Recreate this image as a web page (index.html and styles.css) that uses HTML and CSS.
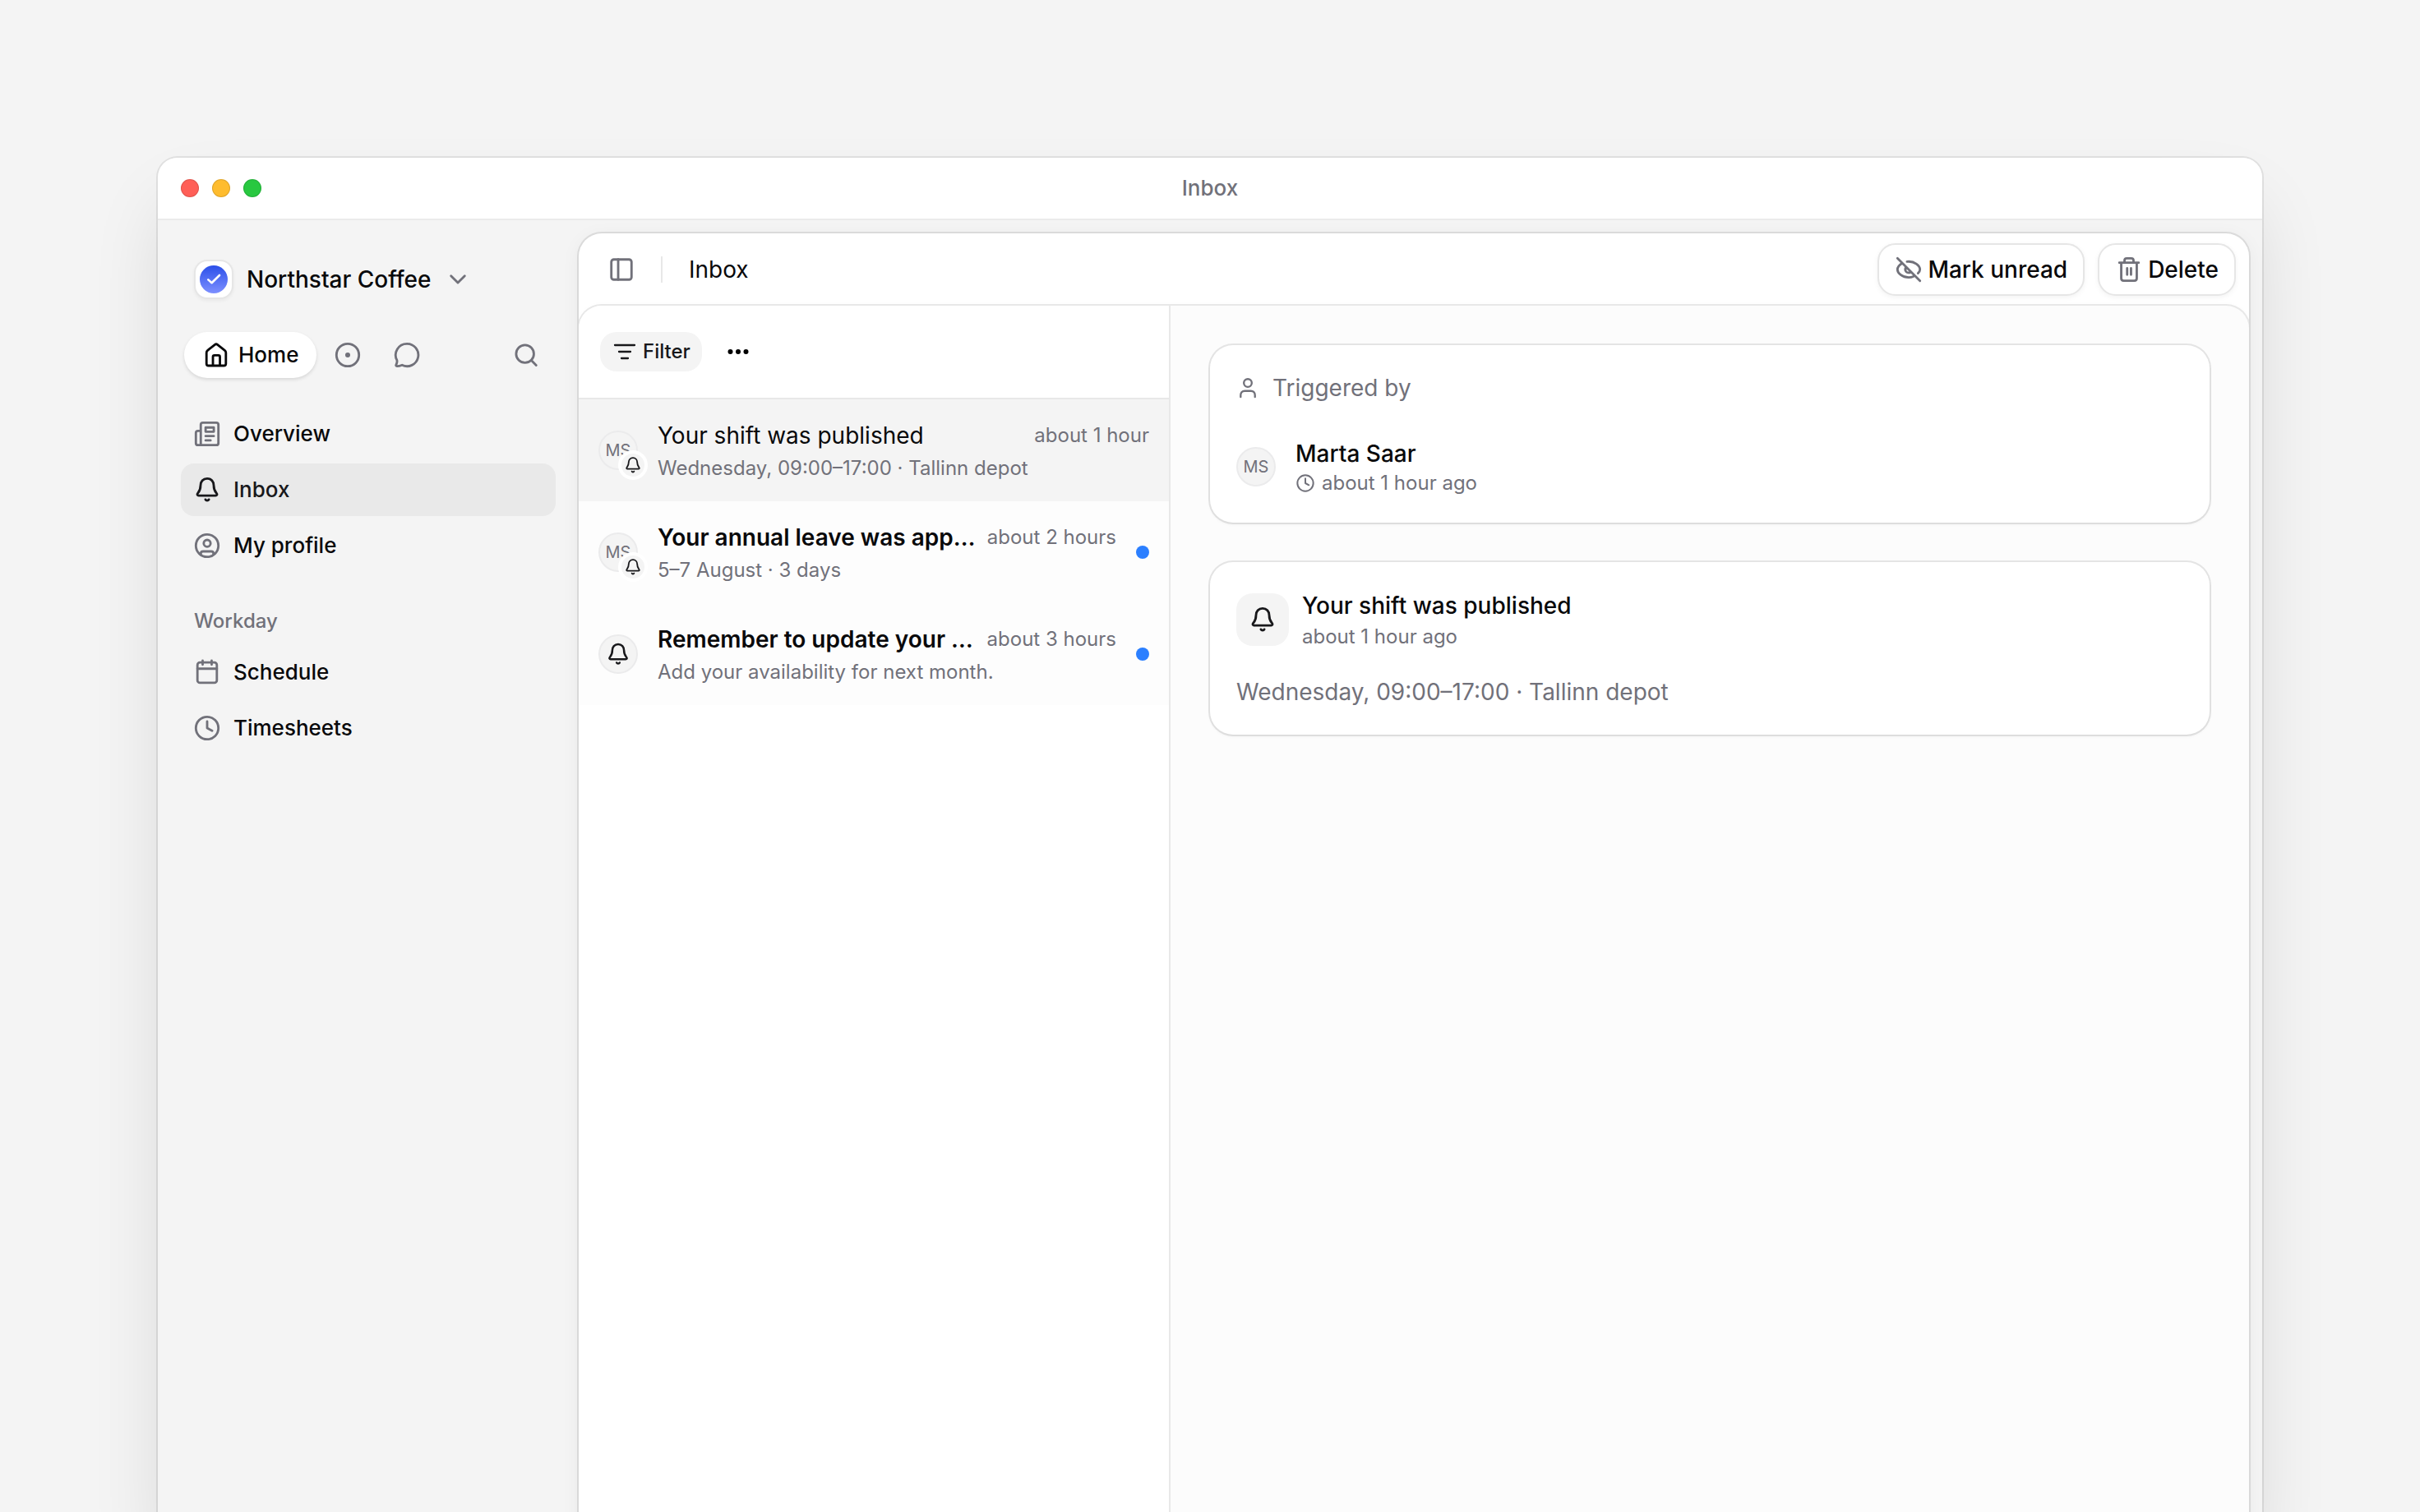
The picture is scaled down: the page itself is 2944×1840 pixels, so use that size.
FILE: index.html
```html
<!DOCTYPE html>
<html lang="en">
<head>
<meta charset="utf-8">
<title>Inbox</title>
<link rel="stylesheet" href="styles.css">
</head>
<body>
<svg class="sprite" aria-hidden="true">
  <symbol id="bell" viewBox="0 0 18 18">
    <path d="M9 1.75C6.4 1.75 4.75 3.8 4.75 6.2 4.75 9.2 4 10 3 11.2 2.3 12.1 2.8 12.75 3.5 12.75H14.5C15.2 12.75 15.7 12.1 15 11.2 14 10 13.25 9.2 13.25 6.2 13.25 3.8 11.6 1.75 9 1.75Z"/>
    <path d="M7.9 15.3a1.2 1.1 0 0 0 2.2 0"/>
  </symbol>
  <symbol id="clock" viewBox="0 0 18 18">
    <circle cx="9" cy="9" r="7.25"/>
    <path d="M9 4.75V9L12.2 10.7"/>
  </symbol>
</svg>
<div class="window">
  <header class="titlebar">
    <div class="lights"><span class="light red"></span><span class="light amber"></span><span class="light green"></span></div>
    <span class="window-title">Inbox</span>
  </header>
  <div class="app">
    <aside class="sidebar">
      <button class="workspace" type="button">
        <span class="logo"><svg viewBox="0 0 34 34" width="34" height="34">
          <defs><linearGradient id="brand" x1="0" y1="0" x2="0" y2="1"><stop offset="0" stop-color="#2b4fe9"/><stop offset="1" stop-color="#7d90ff"/></linearGradient></defs>
          <circle cx="17" cy="17" r="17" fill="url(#brand)"/>
          <path d="M10.3 17.4 14.6 21.2 24 12" fill="none" stroke="#fff" stroke-width="2.6" stroke-linecap="round" stroke-linejoin="round"/>
        </svg></span>
        <span>Northstar Coffee</span>
        <svg class="icon chevron" viewBox="0 0 18 18"><path d="M4.6 6.7 9 11.1 13.4 6.7"/></svg>
      </button>
      <div class="tabs">
        <button class="tab tab-active" type="button">
          <svg class="icon" viewBox="0 0 18 18"><path d="M2.75 7.5C2.75 6.8 3 6.4 3.5 6L8.2 2.3C8.7 1.9 9.3 1.9 9.8 2.3L14.5 6C15 6.4 15.25 6.8 15.25 7.5V14.5C15.25 15.4 14.7 15.9 13.9 15.9H4.1C3.3 15.9 2.75 15.4 2.75 14.5Z"/><path d="M6.9 15.7V10.2C6.9 9.6 7.3 9.2 7.9 9.2H10.4C11 9.2 11.4 9.6 11.4 10.2V15.7"/></svg>
          Home
        </button>
        <button class="tab" type="button" aria-label="Focus">
          <svg class="icon" viewBox="0 0 18 18"><circle cx="9" cy="9" r="7.25"/><circle class="solid" cx="9" cy="9" r="1.6"/></svg>
        </button>
        <button class="tab" type="button" aria-label="Chat">
          <svg class="icon" viewBox="0 0 18 18"><path d="M9 1.75A7.25 7.25 0 1 1 5.9 15.5C4.9 15.9 3.8 16.3 2.6 16.25 2 16.2 1.8 15.7 2.1 15.2 2.6 14.3 2.8 13.4 2.6 12.4A7.25 7.25 0 0 1 9 1.75Z"/></svg>
        </button>
        <button class="tab tab-search" type="button" aria-label="Search">
          <svg class="icon" viewBox="0 0 18 18"><circle cx="8.3" cy="8.3" r="5.7"/><path d="M12.4 12.5 15.5 15.6"/></svg>
        </button>
      </div>
      <nav class="nav">
        <a class="nav-item" href="#overview"><svg class="icon" viewBox="0 0 18 18"><path d="M4.9 16.25V3.1C4.9 2.3 5.4 1.75 6.2 1.75H14.9C15.7 1.75 16.25 2.3 16.25 3.1V14.9C16.25 15.7 15.7 16.25 14.9 16.25H3.1C2.3 16.25 1.75 15.7 1.75 14.9V8.4C1.75 7.6 2.3 7.1 3.1 7.1H4.6"/><path d="M8 4.9H13.3V7.6H8ZM8 10.4H13.3M8 13.2H11.2"/></svg>Overview</a>
        <a class="nav-item nav-current" href="#inbox" aria-current="page"><svg class="icon"><use href="#bell"/></svg>Inbox</a>
        <a class="nav-item" href="#profile"><svg class="icon" viewBox="0 0 18 18"><circle cx="9" cy="9" r="7.25"/><circle cx="9" cy="7.5" r="2.2"/><path d="M4.9 14.8V14.2C4.9 13.3 5.5 12.7 6.4 12.7H11.6C12.5 12.7 13.1 13.3 13.1 14.2V14.8"/></svg>My profile</a>
      </nav>
      <h2 class="nav-heading">Workday</h2>
      <nav class="nav">
        <a class="nav-item" href="#schedule"><svg class="icon" viewBox="0 0 18 18"><rect x="2.75" y="2.75" width="12.5" height="13.1" rx="1.6"/><path d="M2.75 6.75H15.25M6.1 1.6V4.1M11.9 1.6V4.1"/></svg>Schedule</a>
        <a class="nav-item" href="#timesheets"><svg class="icon"><use href="#clock"/></svg>Timesheets</a>
      </nav>
    </aside>
    <main class="panel">
      <header class="panel-head">
        <button class="toggle" type="button" aria-label="Toggle sidebar"><svg class="icon" viewBox="0 0 18 18"><rect x="2.5" y="2.5" width="13" height="13" rx="1.6"/><path d="M6.9 2.5V15.5"/></svg></button>
        <span class="divider"></span>
        <h1 class="panel-title">Inbox</h1>
        <div class="actions">
          <button class="action" type="button"><svg class="icon" viewBox="0 0 18 18"><path d="M1.75 1.75 16.25 16.25M4.6 5C2.9 6.1 1.75 7.7 1.75 9 1.75 11.2 4.8 14.1 9 14.1 10.1 14.1 11.1 13.9 12 13.5M7.9 3.9C12.8 3.3 16.25 6.6 16.25 9 16.25 9.8 15.8 10.6 15 11.4M7 7.9C6.2 9.8 7.7 11.6 9.9 10.9"/></svg>Mark unread</button>
          <button class="action" type="button"><svg class="icon" viewBox="0 0 18 18"><path d="M2.75 4.6H15.25M6.1 4.4V3.2C6.1 2.4 6.7 1.8 7.5 1.8H10.5C11.3 1.8 11.9 2.4 11.9 3.2V4.4M4 4.8V14.6C4 15.6 4.6 16.2 5.5 16.2H12.5C13.4 16.2 14 15.6 14 14.6V4.8M7.8 8.2V12.3M10.3 8.2V12.3"/></svg>Delete</button>
        </div>
      </header>
      <div class="content">
        <section class="list">
          <div class="list-head">
            <button class="filter" type="button"><svg class="filter-icon" viewBox="0 0 32 32"><path d="M4 8H28M9 16H23M12 24H20"/></svg>Filter</button>
            <button class="more" type="button" aria-label="More"><svg viewBox="0 0 32 32" width="32" height="32"><circle cx="6.5" cy="16" r="3"/><circle cx="16" cy="16" r="3"/><circle cx="25.5" cy="16" r="3"/></svg></button>
          </div>
          <ul class="rows">
            <li><a class="row row-current" href="#shift">
              <span class="avatar">MS<span class="badge"><svg class="icon icon-xs"><use href="#bell"/></svg></span></span>
              <span class="row-main"><span class="row-top"><span class="row-title">Your shift was published</span><time class="meta">about 1 hour</time></span><span class="meta">Wednesday, 09:00–17:00 · Tallinn depot</span></span>
            </a></li>
            <li><a class="row row-unread" href="#leave">
              <span class="avatar">MS<span class="badge"><svg class="icon icon-xs"><use href="#bell"/></svg></span></span>
              <span class="row-main"><span class="row-top"><span class="row-title">Your annual leave was approved</span><time class="meta">about 2 hours</time></span><span class="meta">5–7 August · 3 days</span></span>
              <span class="dot"></span>
            </a></li>
            <li><a class="row row-unread" href="#availability">
              <span class="avatar"><svg class="icon icon-md"><use href="#bell"/></svg></span>
              <span class="row-main"><span class="row-top"><span class="row-title">Remember to update your availability</span><time class="meta">about 3 hours</time></span><span class="meta">Add your availability for next month.</span></span>
              <span class="dot"></span>
            </a></li>
          </ul>
        </section>
        <section class="detail">
          <article class="card">
            <h2 class="card-label"><svg class="icon icon-sm" viewBox="0 0 18 18"><circle cx="9" cy="5.2" r="3.1"/><path d="M3.4 16.2V14.6C3.4 12.7 4.7 11.4 6.6 11.4H11.4C13.3 11.4 14.6 12.7 14.6 14.6V16.2"/></svg>Triggered by</h2>
            <div class="person">
              <span class="avatar">MS</span>
              <div class="stack"><strong class="name">Marta Saar</strong><span class="meta stamp"><svg class="icon icon-clock"><use href="#clock"/></svg>about 1 hour ago</span></div>
            </div>
          </article>
          <article class="card">
            <div class="event">
              <span class="tile"><svg class="icon"><use href="#bell"/></svg></span>
              <div class="stack"><strong class="name name-event">Your shift was published</strong><span class="meta stamp">about 1 hour ago</span></div>
            </div>
            <p class="card-text">Wednesday, 09:00–17:00 · Tallinn depot</p>
          </article>
        </section>
      </div>
    </main>
  </div>
</div>
</body>
</html>
```
FILE: styles.css
```css
:root {
  --ink: #09090b;
  --muted: #71717a;
  --grey: #f4f4f4;
  --line: #e8e8e8;
  --ring: rgba(0, 0, 0, .09);
}
* { box-sizing: border-box; }
body {
  margin: 0;
  height: 100vh;
  overflow: hidden;
  padding: 192px 192px 0;
  background: var(--grey);
  color: var(--ink);
  font-family: Inter, sans-serif;
  font-size: 26px;
  font-weight: 500;
  line-height: 40px;
}
h1, h2, p, ul { margin: 0; padding: 0; font: inherit; }
ul { list-style: none; }
a { color: inherit; text-decoration: none; }
button { border: 0; padding: 0; background: none; color: inherit; font: inherit; }
svg { display: block; flex: none; }
.sprite { position: absolute; width: 0; height: 0; }

.icon {
  width: 34px;
  height: 34px;
  fill: none;
  stroke: var(--muted);
  stroke-width: 1.5;
  stroke-linecap: round;
  stroke-linejoin: round;
}
.icon .solid { fill: var(--muted); stroke: none; }
.icon-xs { width: 22px; height: 22px; }
.icon-sm { width: 28px; height: 28px; }
.icon-md { width: 30px; height: 30px; }
.icon-clock { width: 24px; height: 24px; }

.window {
  display: flex;
  flex-direction: column;
  height: calc(100vh - 160px);
  border-radius: 24px;
  overflow: hidden;
  background: var(--grey);
  box-shadow: 0 0 0 2px rgba(0, 0, 0, .08), 0 48px 96px -16px rgba(0, 0, 0, .14);
}
.titlebar {
  flex: none;
  display: grid;
  grid-template-columns: 1fr auto 1fr;
  align-items: center;
  height: 76px;
  padding: 0 28px;
  background: #fff;
  border-bottom: 2px solid #ebebeb;
  color: var(--muted);
}
.lights { display: flex; gap: 16px; }
.light {
  width: 22px;
  height: 22px;
  border-radius: 50%;
  box-shadow: inset 0 0 0 1px rgba(0, 0, 0, .12);
}
.red { background: #ff5f57; }
.amber { background: #febc2e; }
.green { background: #28c840; }

.app { flex: 1; display: flex; min-height: 0; padding: 16px 16px 0 0; }
.sidebar { flex: none; width: 512px; padding: 32px 28px; }
.workspace {
  display: flex;
  align-items: center;
  gap: 16px;
  margin-left: 16px;
  font-size: 28px;
}
.logo {
  display: grid;
  place-items: center;
  width: 48px;
  height: 48px;
  border: 2px solid #e6e6e6;
  border-radius: 16px;
  background: #fff;
  box-shadow: 0 2px 4px rgba(0, 0, 0, .05);
}
.tabs { display: flex; gap: 4px; margin: 40px 4px 36px; }
.tab {
  display: flex;
  align-items: center;
  justify-content: center;
  gap: 10px;
  width: 68px;
  height: 56px;
  border-radius: 28px;
}
.tab-active {
  width: auto;
  padding: 0 22px;
  background: #fff;
  box-shadow: 0 2px 4px rgba(0, 0, 0, .12);
}
.tab-active .icon { stroke: var(--ink); }
.tab-search { width: 64px; margin-left: auto; }
.nav { display: grid; gap: 4px; }
.nav-item {
  display: flex;
  align-items: center;
  gap: 15px;
  height: 64px;
  padding: 0 15px;
  border-radius: 16px;
}
.nav-current { background: #e9e9e9; color: #18181b; }
.nav-current .icon { stroke: #18181b; }
.nav-heading {
  margin: 44px 16px 14px;
  color: var(--muted);
  font-size: 24px;
  line-height: 32px;
}

.panel {
  flex: 1;
  min-width: 0;
  display: flex;
  flex-direction: column;
  overflow: hidden;
  border-radius: 28px 28px 0 0;
  background: #fff;
  box-shadow: 0 0 0 2px var(--ring), 0 4px 24px rgba(0, 0, 0, .05);
}
.panel-head {
  flex: none;
  display: flex;
  align-items: center;
  height: 88px;
  padding: 0 16px 0 35px;
  font-size: 28px;
}
.divider { width: 2px; height: 32px; margin: 0 32px 0 31px; background: var(--line); }
.panel-title { font-weight: 400; }
.actions { display: flex; gap: 16px; margin-left: auto; }
.action {
  display: flex;
  align-items: center;
  gap: 6px;
  height: 64px;
  padding: 0 19px;
  border: 2px solid #e6e6e6;
  border-radius: 22px;
  background: #fff;
  box-shadow: 0 2px 6px rgba(0, 0, 0, .05);
}
.toggle { display: block; }

.content {
  flex: 1;
  display: flex;
  min-height: 0;
  overflow: hidden;
  border-radius: 28px 28px 0 0;
  background: #fcfcfc;
  box-shadow: 0 0 0 2px var(--line), 0 0 12px rgba(0, 0, 0, .02);
}
.list {
  flex: none;
  width: 720px;
  background: #fff;
  border-right: 2px solid var(--line);
}
.list-head {
  display: flex;
  align-items: center;
  gap: 20px;
  height: 114px;
  padding: 0 26px;
  border-bottom: 2px solid var(--line);
  color: #18181b;
  font-size: 24px;
}
.filter {
  display: flex;
  align-items: center;
  gap: 6px;
  height: 48px;
  padding: 0 14px;
  border-radius: 20px;
  background: var(--grey);
}
.filter-icon {
  width: 32px;
  height: 32px;
  fill: none;
  stroke: #18181b;
  stroke-width: 2.3;
  stroke-linecap: round;
}
.more { display: grid; place-items: center; width: 48px; height: 48px; }
.row {
  display: flex;
  align-items: center;
  gap: 24px;
  padding: 20px 24px;
  background: #fdfdfd;
  font-size: 28px;
  font-weight: 400;
}
.row-current { background: var(--grey); }
.row-unread .row-title { font-weight: 600; }
.row-main {
  flex: 1;
  min-width: 0;
  display: grid;
  grid-template-columns: minmax(0, 1fr);
  padding-top: 4px;
}
.row-top { display: flex; justify-content: space-between; gap: 12px; }
.row-title { min-width: 0; overflow: hidden; white-space: nowrap; text-overflow: ellipsis; }
.meta { flex: none; color: var(--muted); font-size: 24px; font-weight: 400; }
.dot { flex: none; width: 16px; height: 16px; border-radius: 50%; background: #2b7fff; }

.avatar {
  position: relative;
  flex: none;
  display: grid;
  place-items: center;
  width: 48px;
  height: 48px;
  border: 2px solid #ebebec;
  border-radius: 50%;
  background: var(--grey);
  color: var(--muted);
  font-size: 20px;
  font-weight: 400;
}
.avatar .icon, .tile .icon { stroke: #18181b; }
.badge {
  position: absolute;
  right: -14px;
  bottom: -14px;
  display: grid;
  place-items: center;
  width: 36px;
  height: 36px;
  border: 4px solid #fff;
  border-radius: 50%;
  background: var(--grey);
}

.detail { flex: 1; min-width: 0; display: flex; flex-direction: column; gap: 48px; padding: 48px; }
.card {
  padding: 32px;
  border-radius: 28px;
  background: #fff;
  box-shadow: 0 0 0 2px var(--ring), 0 2px 4px rgba(0, 0, 0, .05);
  font-size: 28px;
}
.card-label, .card-text { color: var(--muted); font-weight: 400; }
.card-label { display: flex; align-items: center; gap: 16px; margin-bottom: 40px; }
.card-text { margin-top: 30px; }
.person { display: flex; align-items: center; gap: 24px; }
.event { display: flex; align-items: center; gap: 16px; }
.stack { display: grid; }
.name { font-weight: 500; line-height: 40px; }
.name-event { line-height: 42px; }
.stamp { display: flex; align-items: center; gap: 8px; line-height: 32px; }
.name-event + .stamp { line-height: 34px; }
.tile {
  display: grid;
  place-items: center;
  width: 64px;
  height: 64px;
  border-radius: 20px;
  background: var(--grey);
}
```
